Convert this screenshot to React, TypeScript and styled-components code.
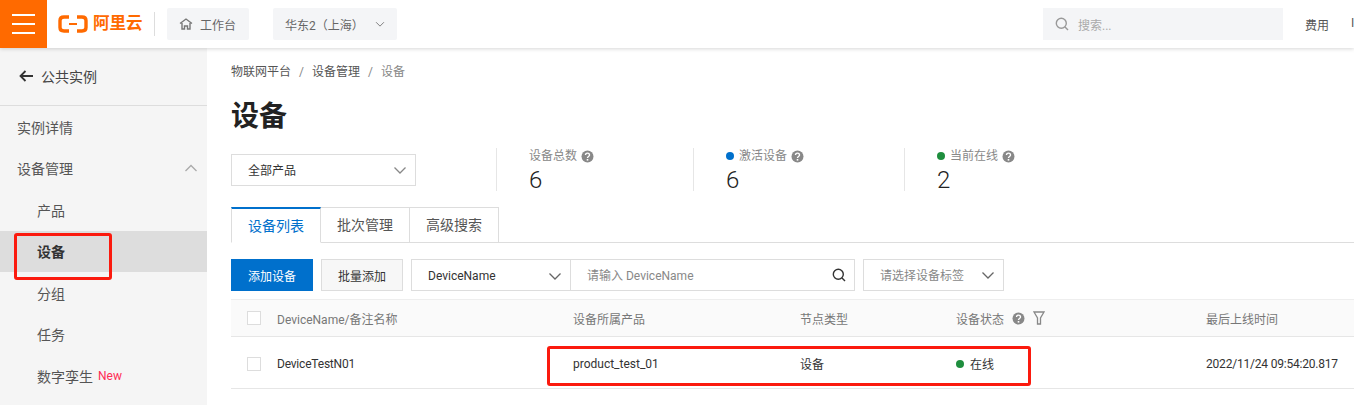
import React from 'react';
import styled, { createGlobalStyle } from 'styled-components';

const GlobalStyle = createGlobalStyle`
  html, body {
    margin: 0;
    height: 405px;
    overflow: hidden;
    background: #fff;
  }
  * {
    box-sizing: border-box;
  }
  body {
    font-family: Roboto, "Noto Sans CJK SC", sans-serif;
    font-size: 12px;
    color: #333;
  }
`;

const Page = styled.div`
  position: relative;
  width: 1354px;
  height: 405px;
  overflow: hidden;
`;

const TopBar = styled.header`
  position: relative;
  z-index: 2;
  display: flex;
  align-items: center;
  height: 48px;
  background: #fff;
  box-shadow: 0 1px 4px rgba(0, 0, 0, 0.16);
`;

const MenuButton = styled.div`
  display: flex;
  flex-direction: column;
  justify-content: center;
  gap: 7px;
  width: 47px;
  height: 48px;
  padding: 0 12px;
  background: #ff6a00;

  i {
    display: block;
    height: 2px;
    background: #fff;
  }
`;

const Logo = styled.div`
  display: flex;
  align-items: center;
  gap: 5px;
  width: 97px;
  height: 24px;
  margin-left: 11px;
  border-right: 1px solid #ddd;
  color: #ff6a00;
  font-size: 16.5px;
  font-weight: 700;
  line-height: 24px;
`;

const BarChip = styled.div<{ $width: number; $left: number }>`
  display: flex;
  align-items: center;
  width: ${(p) => p.$width}px;
  height: 32px;
  margin-left: ${(p) => p.$left}px;
  padding: 0 12px;
  border-radius: 2px;
  background: #f4f5f7;
  color: #666;
  font-size: 12px;
`;

const SearchBox = styled(BarChip)`
  margin-left: auto;
  padding-left: 12px;
  border-radius: 0;
  color: #aaa;
`;

const BarLink = styled.span`
  margin-left: 22px;
  color: #555;
  white-space: nowrap;
`;

const BarEnd = styled.div`
  display: flex;
  width: 71px;
  overflow: hidden;
`;

const Body = styled.div`
  display: flex;
  height: 357px;
`;

const Sidebar = styled.aside`
  flex: none;
  width: 207px;
  background: #f5f5f5;
  font-size: 14px;
  color: #555;
`;

const BackRow = styled.div`
  display: flex;
  align-items: center;
  gap: 8px;
  height: 58px;
  padding: 0 0 2px 19px;
  border-bottom: 1px solid #ddd;
  color: #444;
  font-size: 14px;
`;

const NavList = styled.nav`
  padding-top: 1px;
`;

const NavItem = styled.div<{ $sub?: boolean; $active?: boolean }>`
  display: flex;
  align-items: center;
  justify-content: space-between;
  height: 41.33px;
  padding: 0 9px ${(p) => (p.$sub && !p.$active ? 0 : 2)}px ${(p) => (p.$sub ? 37 : 17)}px;
  background: ${(p) => (p.$active ? '#ddd' : 'transparent')};
  color: ${(p) => (p.$active ? '#333' : '#555')};
  font-weight: ${(p) => (p.$active ? 700 : 400)};
`;

const TwinItem = styled(NavItem)`
  justify-content: flex-start;
`;

const NewTag = styled.span`
  margin-left: 5px;
  color: #ff2d55;
  font-size: 12px;
`;

const Main = styled.main`
  flex: 1;
  min-width: 0;
  padding-left: 24px;
`;

const Crumbs = styled.div`
  display: flex;
  gap: 8px;
  align-items: center;
  height: 18px;
  margin-top: 15px;
  color: #555;
  line-height: 18px;

  em {
    color: #888;
    font-style: normal;
  }
`;

const Title = styled.h1`
  height: 40px;
  margin: 16px 0 0;
  color: #222;
  font-size: 28px;
  font-weight: 700;
  line-height: 40px;
`;

const Summary = styled.section`
  display: flex;
  align-items: flex-start;
  height: 43px;
  margin-top: 11px;
`;

const FilterSlot = styled.div`
  flex: none;
  width: 265px;
  padding-top: 6px;
`;

const Select = styled.div<{ $width: number; $latin?: boolean }>`
  display: flex;
  align-items: center;
  justify-content: space-between;
  flex: none;
  width: ${(p) => p.$width}px;
  height: 32px;
  padding: ${(p) => (p.$latin ? '1px 8px 0 16px' : '0 8px 1px 16px')};
  border: 1px solid #ddd;
  background: #fff;
  color: #333;
`;

const Stat = styled.div<{ $width: number }>`
  flex: none;
  width: ${(p) => p.$width}px;
  height: 43px;
  padding-left: 32px;
  border-left: 1px solid #e6e6e6;
`;

const StatLabel = styled.div`
  display: flex;
  align-items: center;
  gap: 4px;
  height: 16px;
  color: #888;
  line-height: 16px;
`;

const StatDot = styled.i<{ $color: string }>`
  width: 8px;
  height: 8px;
  margin-right: 1px;
  border-radius: 50%;
  background: ${(p) => p.$color};
`;

const StatValue = styled.div`
  height: 27px;
  color: #222;
  font-size: 24px;
  font-weight: 300;
  line-height: 33px;
`;

const Tabs = styled.div`
  display: flex;
  height: 36px;
  margin-top: 16px;
  border-bottom: 1px solid #ddd;
`;

const Tab = styled.div<{ $active?: boolean }>`
  display: flex;
  align-items: center;
  justify-content: center;
  width: ${(p) => (p.$active ? 90 : 89)}px;
  height: ${(p) => (p.$active ? 36 : 35)}px;
  padding-bottom: 2px;
  border: 1px solid #ddd;
  border-left-width: ${(p) => (p.$active ? 1 : 0)}px;
  border-top: ${(p) => (p.$active ? '2px solid #0070cc' : '1px solid #ddd')};
  border-bottom: ${(p) => (p.$active ? '1px solid #fff' : 0)};
  color: ${(p) => (p.$active ? '#0070cc' : '#555')};
  font-size: 14px;
`;

const Toolbar = styled.div`
  display: flex;
  gap: 8px;
  height: 32px;
  margin-top: 16px;
`;

const Button = styled.div<{ $primary?: boolean }>`
  display: flex;
  align-items: center;
  justify-content: center;
  width: 82px;
  height: 32px;
  border: 1px solid ${(p) => (p.$primary ? '#0070cc' : '#ddd')};
  background: ${(p) => (p.$primary ? '#0070cc' : '#f7f7f7')};
  color: ${(p) => (p.$primary ? '#fff' : '#333')};
`;

const SearchGroup = styled.div`
  display: flex;
`;

const KeywordInput = styled.div`
  display: flex;
  align-items: center;
  justify-content: space-between;
  width: 285px;
  height: 32px;
  margin-left: -1px;
  padding: 0 8px 1px 16px;
  border: 1px solid #ddd;
  color: #888;
`;

const Placeholder = styled.span`
  color: #888;
`;

const Table = styled.section`
  margin-top: 8px;
`;

const Row = styled.div<{ $head?: boolean }>`
  display: grid;
  grid-template-columns: 30px 296px 227px 156px 250px 1fr;
  align-items: center;
  height: ${(p) => (p.$head ? 38 : 52)}px;
  padding: ${(p) => (p.$head ? 0 : 2)}px 0 0 16px;
  border-bottom: 1px solid #e6e6e6;
  border-top: ${(p) => (p.$head ? '1px solid #eee' : 0)};
  background: ${(p) => (p.$head ? '#fafafa' : '#fff')};
  color: ${(p) => (p.$head ? '#777' : '#333')};
  white-space: nowrap;
`;

const Tight = styled.span`
  letter-spacing: -0.2px;
`;

const Checkbox = styled.i`
  display: block;
  width: 14px;
  height: 14px;
  border: 1px solid #ddd;
  background: #fff;
`;

const StatusCell = styled.div<{ $gap: number }>`
  display: flex;
  align-items: center;
  gap: ${(p) => p.$gap}px;
`;

const RegionArrow = styled.span`
  display: flex;
  margin-left: auto;
`;

const SearchIconSlot = styled.span`
  display: flex;
  margin-right: 9px;
`;

const HomeIcon = styled.svg`
  margin-right: 7px;
`;

const Callout = styled.div<{ $x: number; $y: number; $w: number; $h: number }>`
  position: absolute;
  left: ${(p) => p.$x}px;
  top: ${(p) => p.$y}px;
  z-index: 3;
  width: ${(p) => p.$w}px;
  height: ${(p) => p.$h}px;
  border: 3px solid #fb1a0e;
  border-radius: 3px;
  pointer-events: none;
`;

const Chevron = ({ up, size = 14, color = '#888' }: { up?: boolean; size?: number; color?: string }) => (
  <svg width={size} height={size} viewBox="0 0 14 14" fill="none" stroke={color} strokeWidth="1.3">
    <path d={up ? 'M1.5 10 7 4.5l5.500 5.500' : 'M1.5 4.5 7 10l5.500-5.500'} />
  </svg>
);

const Help = () => (
  <svg width="13" height="13" viewBox="0 0 13 13">
    <circle cx="6.500" cy="6.500" r="6" fill="#888" />
    <path d="M4.500 5.100c0-2.600 4-2.600 4 0 0 1.500-2 1.400-2 3" fill="none" stroke="#fff" strokeWidth="1.400" />
    <rect x="5.700" y="9" width="1.600" height="1.600" fill="#fff" />
  </svg>
);

const MagnifierIcon = ({ size, color }: { size: number; color: string }) => (
  <svg width={size} height={size} viewBox="0 0 14 14" fill="none" stroke={color} strokeWidth="1.4">
    <circle cx="6.300" cy="6.300" r="5" />
    <path d="m10 10 3 3" />
  </svg>
);

export default function App() {
  return (
    <Page>
      <GlobalStyle />
      <TopBar>
        <MenuButton>
          <i />
          <i />
          <i />
        </MenuButton>
        <Logo>
          <svg width="30" height="18" viewBox="0 0 30 18" fill="none" stroke="#ff6a00" strokeWidth="3.400">
            <path d="M11 2H6Q2 2 2 5.500v7Q2 16 6 16h5M19 2h5q4 0 4 3.500v7q0 3.500-4 3.500h-5" />
            <path d="M11 9h8" strokeWidth="2" />
          </svg>
          阿里云
        </Logo>
        <BarChip $width={82} $left={12}>
          <HomeIcon width="14" height="14" viewBox="0 0 14 14" fill="none" stroke="#777" strokeWidth="1.400">
            <path d="M1 6.500 7 2l6 4.500M3 6v6h2.500V9h3v3H11V6" />
          </HomeIcon>
          工作台
        </BarChip>
        <BarChip $width={124} $left={24}>
          华东2（上海）
          <RegionArrow>
            <Chevron size={10} color="#777" />
          </RegionArrow>
        </BarChip>
        <SearchBox $width={240} $left={0}>
          <SearchIconSlot>
            <MagnifierIcon size={14} color="#999" />
          </SearchIconSlot>
          搜索...
        </SearchBox>
        <BarEnd>
          <BarLink>费用</BarLink>
          <BarLink>ICP</BarLink>
        </BarEnd>
      </TopBar>
      <Body>
        <Sidebar>
          <BackRow>
            <svg width="14" height="12" viewBox="0 0 14 12" fill="none" stroke="#333" strokeWidth="1.800">
              <path d="M6.500 1 1.500 6l5 5M2 6h12" />
            </svg>
            公共实例
          </BackRow>
          <NavList>
            <NavItem>实例详情</NavItem>
            <NavItem>
              设备管理
              <Chevron up color="#aaa" />
            </NavItem>
            <NavItem $sub>产品</NavItem>
            <NavItem $sub $active>
              设备
            </NavItem>
            <NavItem $sub>分组</NavItem>
            <NavItem $sub>任务</NavItem>
            <TwinItem $sub>
              数字孪生
              <NewTag>New</NewTag>
            </TwinItem>
          </NavList>
        </Sidebar>
        <Main>
          <Crumbs>
            物联网平台
            <em>/</em>
            设备管理
            <em>/</em>
            <em>设备</em>
          </Crumbs>
          <Title>设备</Title>
          <Summary>
            <FilterSlot>
              <Select $width={185}>
                全部产品
                <Chevron />
              </Select>
            </FilterSlot>
            <Stat $width={197}>
              <StatLabel>
                设备总数
                <Help />
              </StatLabel>
              <StatValue>6</StatValue>
            </Stat>
            <Stat $width={211}>
              <StatLabel>
                <StatDot $color="#0070cc" />
                激活设备
                <Help />
              </StatLabel>
              <StatValue>6</StatValue>
            </Stat>
            <Stat $width={200}>
              <StatLabel>
                <StatDot $color="#1e8e3e" />
                当前在线
                <Help />
              </StatLabel>
              <StatValue>2</StatValue>
            </Stat>
          </Summary>
          <Tabs>
            <Tab $active>设备列表</Tab>
            <Tab>批次管理</Tab>
            <Tab>高级搜索</Tab>
          </Tabs>
          <Toolbar>
            <Button $primary>添加设备</Button>
            <Button>批量添加</Button>
            <SearchGroup>
              <Select $width={160} $latin>
                DeviceName
                <Chevron color="#666" />
              </Select>
              <KeywordInput>
                请输入 DeviceName
                <MagnifierIcon size={14} color="#333" />
              </KeywordInput>
            </SearchGroup>
            <Select $width={141}>
              <Placeholder>请选择设备标签</Placeholder>
              <Chevron color="#666" />
            </Select>
          </Toolbar>
          <Table>
            <Row $head>
              <Checkbox />
              <span>DeviceName/备注名称</span>
              <span>设备所属产品</span>
              <span>节点类型</span>
              <StatusCell $gap={8}>
                设备状态
                <Help />
                <svg width="12" height="14" viewBox="0 0 12 14" fill="none" stroke="#888" strokeWidth="1.300">
                  <path d="M1 1h10L7.500 7v6h-3V7Z" />
                </svg>
              </StatusCell>
              <span>最后上线时间</span>
            </Row>
            <Row>
              <Checkbox />
              <Tight>DeviceTestN01</Tight>
              <span>product_test_01</span>
              <span>设备</span>
              <StatusCell $gap={5}>
                <StatDot $color="#1e8e3e" />
                在线
              </StatusCell>
              <Tight>2022/11/24 09:54:20.817</Tight>
            </Row>
          </Table>
        </Main>
      </Body>
      <Callout $x={14} $y={233} $w={98} $h={47} />
      <Callout $x={547} $y={346} $w={484} $h={40} />
    </Page>
  );
}
